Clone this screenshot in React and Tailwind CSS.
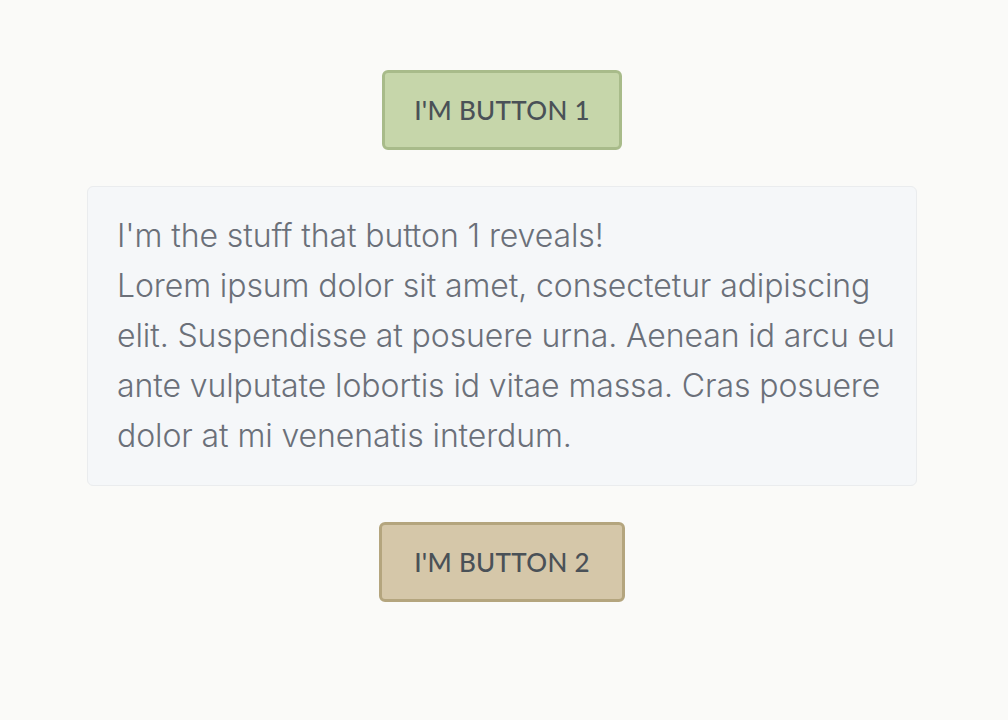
import React from 'react';

const App = () => {
  return (
    <div className="min-h-[720px] w-full bg-[#fafaf8] pt-[70px] pr-[4px] flex flex-col items-center">
      <button
        type="button"
        className="h-[80px] w-[240px] rounded-[6px] border-[3px] border-[#a8bb8a] bg-[#c6d6aa] text-[#4a5157] text-[26px] tracking-[0.3px] uppercase font-medium font-['Lato','Open_Sans',sans-serif]"
      >
        I'm button 1
      </button>

      <div className="mt-[36px] w-[830px] rounded-[6px] border border-[#eaecee] bg-[#f5f7f9] pl-[29px] pr-[8px] py-[24px] text-[32px] leading-[50px] tracking-[-0.1px] font-light text-[#6b7079] font-['Inter',sans-serif]">
        I'm the stuff that button 1 reveals!
        <br />
        Lorem ipsum dolor sit amet, consectetur adipiscing elit. Suspendisse at posuere urna. Aenean id arcu eu ante vulputate lobortis id vitae massa. Cras posuere dolor at mi venenatis interdum.
      </div>

      <button
        type="button"
        className="mt-[36px] h-[80px] w-[246px] rounded-[6px] border-[3px] border-[#b4a57e] bg-[#d5c7a9] text-[#4a5157] text-[26px] tracking-[0.3px] uppercase font-medium font-['Lato','Open_Sans',sans-serif]"
      >
        I'm button 2
      </button>
    </div>
  );
};

export default App;
